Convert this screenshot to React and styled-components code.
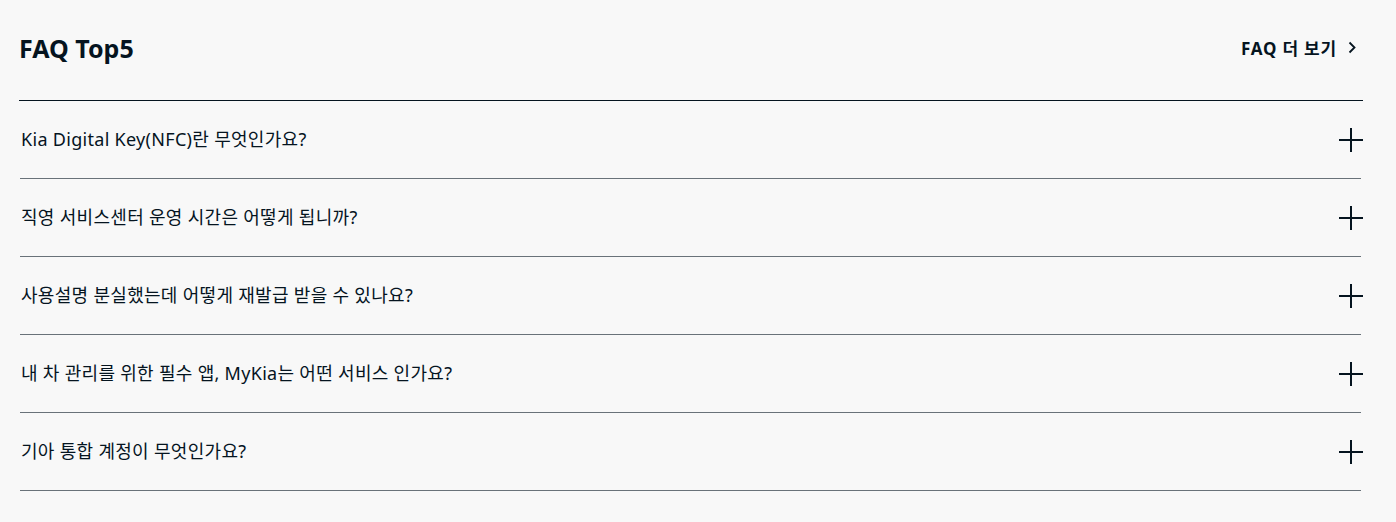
import React from 'react';
import styled, { createGlobalStyle } from 'styled-components';

const GlobalStyle = createGlobalStyle`
  body {
    margin: 0;
    background: #f8f8f8;
    color: #05141f;
    font-family: "Noto Sans", "Noto Sans CJK KR", sans-serif;
  }
`;

const faqs = [
  'Kia Digital Key(NFC)란 무엇인가요?',
  '직영 서비스센터 운영 시간은 어떻게 됩니까?',
  '사용설명 분실했는데 어떻게 재발급 받을 수 있나요?',
  '내 차 관리를 위한 필수 앱, MyKia는 어떤 서비스 인가요?',
  '기아 통합 계정이 무엇인가요?',
];

const Section = styled.section`
  width: 1344px;
  padding-left: 19px;
`;

const Header = styled.div`
  display: flex;
  align-items: center;
  justify-content: space-between;
  height: 95px;
  padding-bottom: 5px;
  border-bottom: 1px solid #05141f;
`;

const Title = styled.h2`
  margin: 0;
  font-size: 25px;
  font-weight: 700;
  letter-spacing: 0;
`;

const MoreLink = styled.a`
  display: flex;
  align-items: center;
  gap: 11px;
  margin-right: 7px;
  font-size: 17px;
  font-weight: 700;
  letter-spacing: 0.8px;
  color: #05141f;
  text-decoration: none;
  cursor: pointer;
`;

const List = styled.ul`
  list-style: none;
  margin: 0;
  padding: 0;
`;

const Item = styled.li`
  display: flex;
  align-items: center;
  justify-content: space-between;
  height: 77px;
  margin: 0 2px 0 1px;
  border-bottom: 1px solid #697279;
  cursor: pointer;
`;

const Question = styled.span`
  font-size: 18px;
  font-weight: 400;
  letter-spacing: 0.3px;
  padding-left: 1px;
  margin-top: -3px;
`;

const PlusIcon = styled.svg`
  width: 24px;
  height: 24px;
  margin-right: -2px;
  flex-shrink: 0;
`;

const Chevron = () => (
  <svg width="8" height="13" viewBox="0 0 8 13">
    <path d="M1.5 1.5 L6.5 6.5 L1.5 11.5" fill="none" stroke="#05141f" strokeWidth="1.8" />
  </svg>
);

export default function App() {
  return (
    <>
      <GlobalStyle />
      <Section>
        <Header>
          <Title>FAQ Top5</Title>
          <MoreLink>
            FAQ 더 보기
            <Chevron />
          </MoreLink>
        </Header>
        <List>
          {faqs.map((q) => (
            <Item key={q}>
              <Question>{q}</Question>
              <PlusIcon viewBox="0 0 24 24">
                <path d="M12 0 V24 M0 12 H24" stroke="#05141f" strokeWidth="2" fill="none" />
              </PlusIcon>
            </Item>
          ))}
        </List>
      </Section>
    </>
  );
}
